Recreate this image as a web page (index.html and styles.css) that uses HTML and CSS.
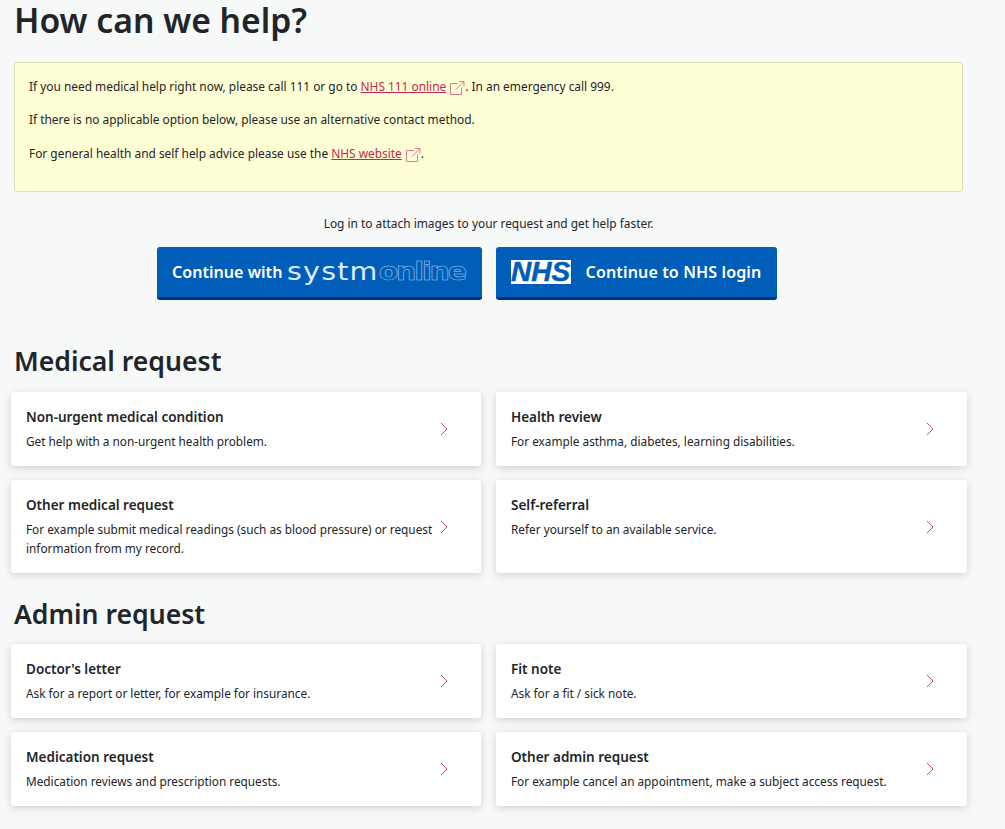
FILE: index.html
```html
<!DOCTYPE html>
<html>
<head>
    <meta charset="UTF-8">
    <title>How can we help?</title>
    <link rel="stylesheet" href="styles.css">
</head>
<body>
    <div class="container">
        <h1>How can we help?</h1>

        <div class="notice">
            <p>If you need medical help right now, please call 111 or go to <a href="#">NHS 111 online<svg class="ext-icon" viewBox="0 0 16 16"><path d="M9 3.5H1.5V14.5H12.5V7.5M7 9.5L15 1.5M10 1.5H15V6.5"/></svg></a>. In an emergency call 999.</p>
            <p>If there is no applicable option below, please use an alternative contact method.</p>
            <p>For general health and self help advice please use the <a href="#">NHS website<svg class="ext-icon" viewBox="0 0 16 16"><path d="M9 3.5H1.5V14.5H12.5V7.5M7 9.5L15 1.5M10 1.5H15V6.5"/></svg></a>.</p>
        </div>

        <p class="login-hint">Log in to attach images to your request and get help faster.</p>
        <div class="login-buttons">
            <a class="login-button" href="#">Continue with <span class="systm-logo">systm<span class="systm-online">online</span></span></a>
            <a class="login-button nhs-button" href="#"><span class="nhs-logo">NHS</span>Continue to NHS login</a>
        </div>

        <h2>Medical request</h2>
        <div class="card-grid">
            <a class="card" href="#">
                <div class="card-text">
                    <strong>Non-urgent medical condition</strong>
                    <span>Get help with a non-urgent health problem.</span>
                </div>
                <svg class="chevron" viewBox="0 0 8 14"><path d="M1 1L7 7L1 13"/></svg>
            </a>
            <a class="card" href="#">
                <div class="card-text">
                    <strong>Health review</strong>
                    <span>For example asthma, diabetes, learning disabilities.</span>
                </div>
                <svg class="chevron" viewBox="0 0 8 14"><path d="M1 1L7 7L1 13"/></svg>
            </a>
            <a class="card" href="#">
                <div class="card-text">
                    <strong>Other medical request</strong>
                    <span>For example submit medical readings (such as blood pressure) or request information from my record.</span>
                </div>
                <svg class="chevron" viewBox="0 0 8 14"><path d="M1 1L7 7L1 13"/></svg>
            </a>
            <a class="card" href="#">
                <div class="card-text">
                    <strong>Self-referral</strong>
                    <span>Refer yourself to an available service.</span>
                </div>
                <svg class="chevron" viewBox="0 0 8 14"><path d="M1 1L7 7L1 13"/></svg>
            </a>
        </div>

        <h2 class="admin-title">Admin request</h2>
        <div class="card-grid">
            <a class="card" href="#">
                <div class="card-text">
                    <strong>Doctor's letter</strong>
                    <span>Ask for a report or letter, for example for insurance.</span>
                </div>
                <svg class="chevron" viewBox="0 0 8 14"><path d="M1 1L7 7L1 13"/></svg>
            </a>
            <a class="card" href="#">
                <div class="card-text">
                    <strong>Fit note</strong>
                    <span>Ask for a fit / sick note.</span>
                </div>
                <svg class="chevron" viewBox="0 0 8 14"><path d="M1 1L7 7L1 13"/></svg>
            </a>
            <a class="card" href="#">
                <div class="card-text">
                    <strong>Medication request</strong>
                    <span>Medication reviews and prescription requests.</span>
                </div>
                <svg class="chevron" viewBox="0 0 8 14"><path d="M1 1L7 7L1 13"/></svg>
            </a>
            <a class="card" href="#">
                <div class="card-text">
                    <strong>Other admin request</strong>
                    <span>For example cancel an appointment, make a subject access request.</span>
                </div>
                <svg class="chevron" viewBox="0 0 8 14"><path d="M1 1L7 7L1 13"/></svg>
            </a>
        </div>
    </div>
</body>
</html>
```

FILE: styles.css
```css
body {
    margin: 0;
    background: #F7F8F8;
    color: #212529;
    font-family: "Noto Sans", "Open Sans", sans-serif;
    font-size: 11.9px;
    line-height: 19px;
}

.container {
    width: 949px;
    padding: 0 0 23px 14px;
}

h1 {
    margin: 0;
    height: 62px;
    font-size: 33.7px;
    font-weight: 600;
    line-height: 41px;
}

h2 {
    margin: 46px 0 15px;
    font-size: 26.6px;
    font-weight: 600;
    line-height: 31px;
}

.admin-title {
    margin-top: 26px;
    margin-bottom: 14px;
}

.notice {
    box-sizing: border-box;
    height: 130px;
    padding: 14px 14px 0;
    background: #FFFFD6;
    border: 1px solid #DEDFB4;
    border-radius: 3px;
}

.notice p {
    margin: 0 0 14.3px;
}

.notice a {
    color: #C4264F;
}

.ext-icon {
    width: 16px;
    height: 16px;
    margin-left: 3px;
    margin-bottom: -5px;
    vertical-align: baseline;
    fill: none;
    stroke: #E0788F;
    stroke-width: 1;
}

.login-hint {
    margin: 22px 0 14px;
    text-align: center;
}

.login-buttons {
    display: flex;
    gap: 14px;
    margin-left: 143px;
}

.login-button {
    box-sizing: border-box;
    display: flex;
    align-items: center;
    height: 53px;
    padding: 0 16px 0 15px;
    background: #005EB8;
    border-bottom: 3px solid #003087;
    border-radius: 3px;
    color: white;
    font-size: 16.1px;
    font-weight: 600;
    text-decoration: none;
    white-space: pre;
}

.nhs-button {
    letter-spacing: 0.1px;
}

.systm-logo {
    display: inline-block;
    width: 179px;
    color: #DCEBFA;
    font-family: "DejaVu Sans", sans-serif;
    font-size: 24px;
    font-weight: 400;
    letter-spacing: 1px;
    line-height: 24px;
    transform: scaleX(1.19);
    transform-origin: left center;
}

.systm-online {
    color: transparent;
    font-weight: 700;
    letter-spacing: -1.8px;
    -webkit-text-stroke: 0.5px #A9CBEC;
}

.nhs-logo {
    width: 60px;
    height: 24px;
    margin-right: 15px;
    background: white;
    color: #005EB8;
    font-family: "Liberation Sans", sans-serif;
    font-size: 28px;
    font-style: italic;
    font-weight: 700;
    letter-spacing: 0;
    line-height: 24px;
    text-align: center;
    -webkit-text-stroke: 0.5px #005EB8;
}

.card-grid {
    display: grid;
    grid-template-columns: 470px 471px;
    gap: 14px 15px;
    margin-left: -3px;
}

.card {
    box-sizing: border-box;
    display: flex;
    align-items: center;
    min-height: 74px;
    padding: 15.5px 33px 15px 15px;
    background: white;
    border-radius: 3px;
    box-shadow: 0 2px 8px rgba(0,0,0,0.16);
    color: #212529;
    text-decoration: none;
}

.card-text {
    flex: 1;
    align-self: flex-start;
}

.card-text strong {
    display: block;
    margin-bottom: 5.5px;
    font-size: 13.5px;
    font-weight: 600;
}

.card-text span {
    display: block;
    font-size: 11.8px;
}

.chevron {
    flex-shrink: 0;
    width: 8px;
    height: 14px;
    margin-left: 2px;
    fill: none;
    stroke: #CF4A6C;
    stroke-width: 1;
}
```
